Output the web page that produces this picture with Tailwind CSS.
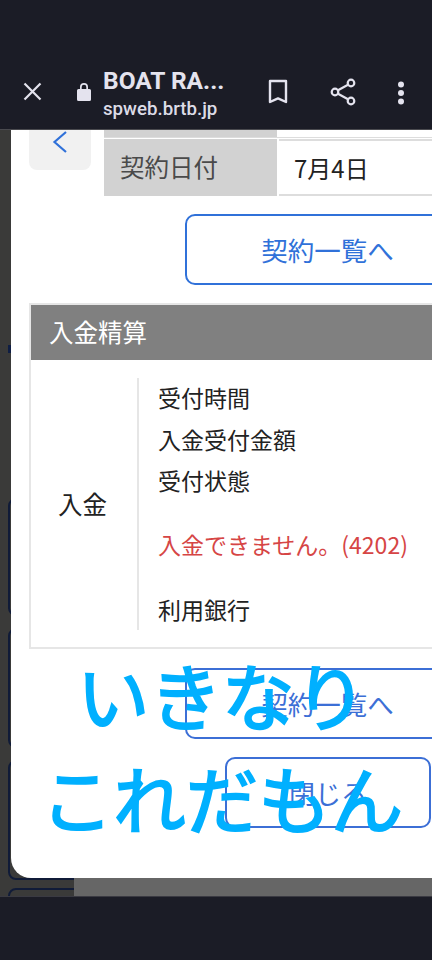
<!DOCTYPE html>
<html lang="ja">
<head>
  <meta charset="UTF-8" />
  <meta name="viewport" content="width=device-width, initial-scale=1" />
  <title>BOAT RACE</title>
  <script src="https://cdn.jsdelivr.net/npm/@tailwindcss/browser@4"></script>
</head>
<body class="bg-[#1b1c26]">
  <div class="relative w-[432px] h-[960px] overflow-hidden flex flex-col font-['Noto_Sans_CJK_JP',sans-serif]">

    <!-- browser toolbar -->
    <header class="h-[130px] shrink-0 bg-[#1b1c26] pt-[66px] flex items-start text-[#e4e3ee] border-b border-[#4a4a4f]">
      <svg class="ml-[23px] mt-[16px] w-[19px] h-[19px]" viewBox="0 0 19 19" fill="none" stroke="currentColor" stroke-width="2.2"><path d="M1.5 1.5 17.5 17.5M17.5 1.5 1.5 17.5" /></svg>
      <svg class="ml-[34px] mt-[16px] w-[16px] h-[20px]" viewBox="0 0 16 20" fill="currentColor"><path d="M2.5 7H4V5a4 4 0 0 1 8 0v2h1.5A1.5 1.5 0 0 1 15 8.5v9a1.5 1.5 0 0 1-1.500 1.500h-11A1.500 1.500 0 0 1 1 17.500v-9A1.500 1.500 0 0 1 2.500 7ZM5.700 7h4.600V5a2.300 2.300 0 0 0-4.600 0Z" /></svg>
      <div class="ml-[11px] w-[150px] font-['Roboto',sans-serif]">
        <p class="text-[24.500px] leading-[30px] font-bold whitespace-nowrap">BOAT RA...</p>
        <p class="text-[18.700px] leading-[27px] font-medium text-[#dcdbe6]">spweb.brtb.jp</p>
      </div>
      <svg class="ml-[15px] mt-[13px] w-[20px] h-[26px]" viewBox="0 0 20 26" fill="none" stroke="currentColor" stroke-width="2.400"><path d="M2 2h16v21l-8-3.600L2 23Z" stroke-linejoin="round" /></svg>
      <svg class="ml-[42px] mt-[12px] w-[26px] h-[28px]" viewBox="0 0 26 28" fill="none" stroke="currentColor" stroke-width="2.200"><circle cx="21" cy="5" r="3.300" /><circle cx="5" cy="14" r="3.300" /><circle cx="21" cy="23" r="3.300" /><path d="M8 12.300 18 6.700M8 15.700l10 5.600" /></svg>
      <svg class="ml-[41px] mt-[15px] w-[8px] h-[24px]" viewBox="0 0 8 24" fill="currentColor"><circle cx="4" cy="3.500" r="3" /><circle cx="4" cy="12" r="3" /><circle cx="4" cy="20.500" r="3" /></svg>
    </header>

    <main class="relative flex-1 overflow-hidden bg-[#3a3a39]">
      <!-- page behind the dialog -->
      <div class="absolute left-[8px] top-[215px] w-[20px] h-[8px] bg-[#0f1e44]"></div>
      <div class="absolute left-[8px] top-[368px] w-[20px] h-[118px] border-2 border-[#101b38] rounded-lg"></div>
      <div class="absolute left-[8px] top-[498px] w-[20px] h-[120px] border-2 border-[#101b38] rounded-lg"></div>
      <div class="absolute left-[8px] top-[630px] w-[90px] h-[120px] border-2 border-[#101b38] rounded-lg"></div>
      <div class="absolute left-[8px] top-[758px] w-[90px] h-[40px] border-2 border-[#101b38] rounded-lg"></div>
      <div class="absolute left-[74px] top-[600px] right-0 bottom-0 bg-[#666666]"></div>

      <!-- dialog -->
      <section class="absolute left-[11px] top-0 w-[520px] h-[748px] bg-white rounded-bl-[20px] text-[#222222]">
        <div class="flex items-start">
          <div class="ml-[18px] w-[62px] h-[40px] bg-[#f1f1f1] rounded-b-lg flex justify-center">
            <svg class="mt-[1px] w-[16px] h-[22px]" viewBox="0 0 16 22" fill="none" stroke="#3071d9" stroke-width="2.200"><path d="M14 1 2.500 11 14 21" /></svg>
          </div>
          <div class="ml-[13px] flex-1">
            <div class="flex h-[8px] gap-[2px] border-b border-[#dddddd]">
              <div class="w-[173px] bg-[#d2d2d2]"></div>
              <div class="flex-1"></div>
            </div>
            <div class="mt-px flex h-[57px] gap-[2px]">
              <div class="w-[173px] bg-[#d2d2d2] pl-[16px] flex items-center text-[24.500px] text-[#4a4a4a]">契約日付</div>
              <div class="flex-1 pl-[15px] flex items-center text-[24px] border-y-2 border-[#dddddd]">7月4日</div>
            </div>
          </div>
        </div>

        <a class="mt-[18px] ml-[174px] w-[285px] h-[71px] flex items-center justify-center border-2 border-[#3071d9] rounded-[10px] text-[26.500px] text-[#3071d9]">契約一覧へ</a>

        <div class="mt-[18px] ml-[18px] border-2 border-r-0 border-[#e6e6e6] h-[346px]">
          <h2 class="h-[55px] bg-[#808080] text-white text-[24.500px] pl-[18px] flex items-center">入金精算</h2>
          <div class="flex pt-[18px]">
            <div class="w-[108px] h-[252px] border-r-2 border-[#e6e6e6] flex items-center justify-center text-[24.500px] pr-[3px]">入金</div>
            <ul class="pl-[19px] text-[23px] leading-[34px]">
              <li class="mt-[2px]">受付時間</li>
              <li class="mt-[8px]">入金受付金額</li>
              <li class="mt-[7px]">受付状態</li>
              <li class="mt-[30px] text-[#d64545]">入金できません。(4202)</li>
              <li class="mt-[31px]">利用銀行</li>
            </ul>
          </div>
        </div>

        <a class="mt-[19px] ml-[174px] w-[285px] h-[71px] flex items-center justify-center border-2 border-[#3c6fd6] rounded-[10px] text-[26.500px] text-[#3c6fd6]">契約一覧へ</a>
        <a class="mt-[18px] ml-[214px] w-[206px] h-[71px] flex items-center justify-center border-2 border-[#3c6fd6] rounded-[10px] text-[26px] text-[#3c6fd6]">閉じる</a>
      </section>
    </main>

    <footer class="h-[64px] shrink-0 bg-[#1b1c26] border-t border-[#3a3a42]"></footer>

    <!-- caption over the screenshot -->
    <div class="absolute left-0 top-[642px] w-[432px] pl-[12px] text-center text-[#00b0ff] text-[72.500px] leading-[103px] font-normal [-webkit-text-stroke:2px_#00b0ff] whitespace-nowrap">
      <p>いきなり</p>
      <p>これだもん</p>
    </div>
  </div>
</body>
</html>
